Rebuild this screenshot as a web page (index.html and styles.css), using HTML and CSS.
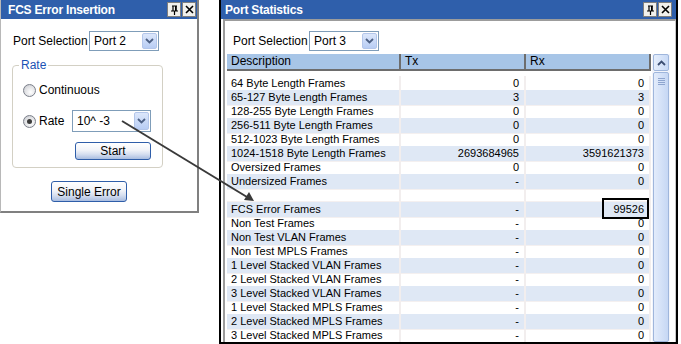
FILE: index.html
```html
<!DOCTYPE html>
<html>
<head>
<meta charset="utf-8">
<link rel="stylesheet" href="styles.css">
</head>
<body>
<div class="canvas">
  <section class="lp">
    <header class="tb">
      <span class="tb-title">FCS Error Insertion</span>
      <div class="tbtns">
        <span class="tbtn"><svg width="9" height="10" viewBox="0 0 9 10"><path d="M2 1h5M3 1v5M6 1v5M1 6h7M4.5 6v4" stroke="#000" stroke-width="1.2" fill="none"/><rect x="5" y="1" width="1.5" height="5" fill="#000"/></svg></span>
        <span class="tbtn"><svg width="9" height="9" viewBox="0 0 9 9"><path d="M1 1l7 7M8 1l-7 7" stroke="#000" stroke-width="1.6"/></svg></span>
      </div>
    </header>
    <div class="lp-body">
      <div class="psel">
        <span class="plabel">Port Selection</span>
        <div class="combo c-port"><span class="cval">Port 2</span><span class="dd"><svg width="9" height="6" viewBox="0 0 9 6"><path d="M1 1l3.5 3.5L8 1" stroke="#4d6185" stroke-width="1.8" fill="none"/></svg></span></div>
      </div>
      <fieldset class="grp">
        <legend>Rate</legend>
        <div class="radio r1"><span class="rb"></span><span>Continuous</span></div>
        <div class="radio r2"><span class="rb on"></span><span class="rlab">Rate</span>
          <div class="combo c-rate"><span class="cval">10^ -3</span><span class="dd"><svg width="9" height="6" viewBox="0 0 9 6"><path d="M1 1l3.5 3.5L8 1" stroke="#4d6185" stroke-width="1.8" fill="none"/></svg></span></div>
        </div>
        <button class="btn b-start">Start</button>
      </fieldset>
      <button class="btn b-single">Single Error</button>
    </div>
  </section>

  <section class="rp">
    <header class="tb">
      <span class="tb-title">Port Statistics</span>
      <div class="tbtns">
        <span class="tbtn"><svg width="9" height="10" viewBox="0 0 9 10"><path d="M2 1h5M3 1v5M6 1v5M1 6h7M4.5 6v4" stroke="#000" stroke-width="1.2" fill="none"/><rect x="5" y="1" width="1.5" height="5" fill="#000"/></svg></span>
        <span class="tbtn"><svg width="9" height="9" viewBox="0 0 9 9"><path d="M1 1l7 7M8 1l-7 7" stroke="#000" stroke-width="1.6"/></svg></span>
      </div>
    </header>
    <div class="rp-body">
      <div class="psel rsel">
        <span class="plabel">Port Selection</span>
        <div class="combo c-port2"><span class="cval">Port 3</span><span class="dd"><svg width="9" height="6" viewBox="0 0 9 6"><path d="M1 1l3.5 3.5L8 1" stroke="#4d6185" stroke-width="1.8" fill="none"/></svg></span></div>
      </div>
      <div class="tablewrap">
        <div class="grid">
          <div class="row head"><div class="c d">Description</div><div class="c t">Tx</div><div class="c r">Rx</div></div>
          <div class="rows">
            <div class="row"><div class="c d">64 Byte Length Frames</div><div class="c n">0</div><div class="c n">0</div></div>
            <div class="row alt"><div class="c d">65-127 Byte Length Frames</div><div class="c n">3</div><div class="c n">3</div></div>
            <div class="row"><div class="c d">128-255 Byte Length Frames</div><div class="c n">0</div><div class="c n">0</div></div>
            <div class="row alt"><div class="c d">256-511 Byte Length Frames</div><div class="c n">0</div><div class="c n">0</div></div>
            <div class="row"><div class="c d">512-1023 Byte Length Frames</div><div class="c n">0</div><div class="c n">0</div></div>
            <div class="row alt"><div class="c d">1024-1518 Byte Length Frames</div><div class="c n">2693684965</div><div class="c n">3591621373</div></div>
            <div class="row"><div class="c d">Oversized Frames</div><div class="c n">0</div><div class="c n">0</div></div>
            <div class="row alt"><div class="c d">Undersized Frames</div><div class="c n">-</div><div class="c n">0</div></div>
            <div class="row"><div class="c d"></div><div class="c n"></div><div class="c n"></div></div>
            <div class="row alt"><div class="c d">FCS Error Frames</div><div class="c n">-</div><div class="c n hl">99526<span class="hbox"></span></div></div>
            <div class="row"><div class="c d">Non Test Frames</div><div class="c n">-</div><div class="c n">0</div></div>
            <div class="row alt"><div class="c d">Non Test VLAN Frames</div><div class="c n">-</div><div class="c n">0</div></div>
            <div class="row"><div class="c d">Non Test MPLS Frames</div><div class="c n">-</div><div class="c n">0</div></div>
            <div class="row alt"><div class="c d">1 Level Stacked VLAN Frames</div><div class="c n">-</div><div class="c n">0</div></div>
            <div class="row"><div class="c d">2 Level Stacked VLAN Frames</div><div class="c n">-</div><div class="c n">0</div></div>
            <div class="row alt"><div class="c d">3 Level Stacked VLAN Frames</div><div class="c n">-</div><div class="c n">0</div></div>
            <div class="row"><div class="c d">1 Level Stacked MPLS Frames</div><div class="c n">-</div><div class="c n">0</div></div>
            <div class="row alt"><div class="c d">2 Level Stacked MPLS Frames</div><div class="c n">-</div><div class="c n">0</div></div>
            <div class="row"><div class="c d">3 Level Stacked MPLS Frames</div><div class="c n">-</div><div class="c n">0</div></div>
          </div>
        </div>
        <div class="sbar">
          <div class="sb-up"><svg width="9" height="6" viewBox="0 0 9 6"><path d="M1 5l3.5-3.5L8 5" stroke="#3b4e72" stroke-width="1.8" fill="none"/></svg></div>
          <div class="sb-thumb"><span class="grip"></span><span class="grip"></span><span class="grip"></span><span class="grip"></span></div>
        </div>
      </div>
    </div>
  </section>

  <svg class="arrow" width="681" height="344" viewBox="0 0 681 344">
    <line x1="122" y1="121" x2="247" y2="197" stroke="#3a3a3a" stroke-width="2"/>
    <polygon points="254,201 244,200 249,192" fill="#3a3a3a"/>
  </svg>
</div>
</body>
</html>
```

FILE: styles.css
```css
* { box-sizing: border-box; }
html, body { margin: 0; padding: 0; background: #fff; }
body {
  font-family: "Liberation Sans", Arial, sans-serif;
  font-size: 11px;
  color: #000;
  width: 681px;
  height: 344px;
  overflow: hidden;
}
.canvas {
  position: relative;
  display: flex;
  align-items: flex-start;
  width: 681px;
  height: 344px;
}

/* title bars */
.tb {
  height: 19px;
  background: #2f5fab;
  display: flex;
  align-items: center;
  justify-content: space-between;
  padding: 0 3px 0 7px;
}
.tb-title {
  color: #fff;
  font-weight: bold;
  font-size: 12px;
  letter-spacing: -0.2px;
}
.tbtns { display: flex; gap: 1px; }
.tbtn {
  width: 14px;
  height: 15px;
  background: #f1f0ec;
  border: 1px solid #7e7e7e;
  display: flex;
  align-items: center;
  justify-content: center;
}

/* left panel */
.lp {
  width: 199px;
  height: 213px;
  border-right: 2px solid #808080;
  border-bottom: 2px solid #808080;
  border-left: 1px solid #b8b8b8;
}
.lp .tb { padding-right: 1px; }
.lp-body { display: flex; flex-direction: column; }
.psel { display: flex; align-items: center; }
.lp .psel { padding: 12px 0 0 12px; }
.plabel { width: 76px; font-size: 12px; }
.combo {
  height: 20px;
  border: 1px solid #7f9db9;
  background: #fff;
  display: flex;
  align-items: center;
  justify-content: space-between;
  padding: 1px;
  font-size: 12px;
}
.cval { padding-left: 3px; }
.dd {
  width: 15px;
  height: 16px;
  border: 1px solid #b3c6ea;
  border-radius: 2px;
  background: linear-gradient(#dce7fb, #b8cdf4);
  display: flex;
  align-items: center;
  justify-content: center;
}
.c-port { width: 70px; }

.grp {
  margin: 7px 0 0 11px;
  width: 151px;
  height: 110px;
  border: 1px solid #d3d0c4;
  border-radius: 4px;
  padding: 0 6px 0 6px;
  display: flex;
  flex-direction: column;
}
.grp legend {
  color: #1a52b4;
  padding: 0 2px;
  font-size: 12px;
  line-height: 14px;
}
.radio { display: flex; align-items: center; font-size: 12px; }
.r1 { margin: 11px 0 0 4px; }
.r2 { margin: 13px 0 0 4px; }
.rb {
  width: 13px;
  height: 13px;
  border-radius: 50%;
  border: 1px solid #7b7f8a;
  background: radial-gradient(circle at 60% 65%, #fff 0, #dedfe2 60%, #b9bcc3 100%);
  margin-right: 3px;
  position: relative;
  display: flex;
  align-items: center;
  justify-content: center;
}
.rb.on::after {
  content: "";
  width: 5px;
  height: 5px;
  border-radius: 50%;
  background: #3b3b3b;
}
.rlab { width: 33px; }
.c-rate { width: 79px; height: 22px; }
.c-rate .dd { height: 18px; }

.btn {
  font-family: "Liberation Sans", Arial, sans-serif;
  font-size: 12px;
  color: #000;
  border: 1px solid #2f5ea9;
  border-radius: 3px;
  background: linear-gradient(#ffffff 0%, #f1f3f8 45%, #d6dff0 70%, #a9bde0 100%);
  padding: 0;
}
.b-start { width: 76px; height: 18px; margin: 10px 0 0 56px; }
.b-single { width: 76px; height: 21px; margin: 13px 0 0 50px; }

/* right panel */
.rp {
  margin-left: 20px;
  width: 459px;
  height: 344px;
  border-left: 2px solid #000;
  border-right: 2px solid #000;
  border-bottom: 2px solid #000;
  display: flex;
  flex-direction: column;
}
.rp .tb { padding-left: 4px; padding-right: 4px; }
.rp-body {
  flex: 1;
  margin-left: 2px;
  border-left: 2px solid #9c9c9c;
  border-top: 2px solid #9c9c9c;
  border-right: 1px solid #c8c8c8;
  display: flex;
  flex-direction: column;
  overflow: hidden;
}
.rsel { padding: 10px 0 3px 8px; }
.c-port2 { width: 70px; }

.tablewrap { display: flex; padding-left: 2px; }
.grid { width: 424px; }
.row {
  display: grid;
  grid-template-columns: 174px 125px 125px;
  height: 14px;
}
.row .c {
  border-right: 2px solid #f2eeee;
  border-bottom: 1px solid #f4f0f0;
  line-height: 15px;
  white-space: nowrap;
  overflow: visible;
}
.row .d { padding-left: 4px; }
.row .n { text-align: right; padding-right: 5px; }
.row.alt .c { background: #dfe8f5; }
.head { height: 16px; }
.head .c {
  background: #a7c5e7;
  border-right: 2px solid #6d6d6d;
  border-bottom: 2px solid #6d6d6d;
  line-height: 15px;
  font-size: 12px;
  padding-left: 4px;
}
.head .t { padding-left: 4px; }
.rows { margin-top: 6px; }
.hl { position: relative; }
.hbox {
  position: absolute;
  right: 0;
  top: -4px;
  width: 47px;
  height: 21px;
  border: 2px solid #000;
}

.sbar {
  width: 18px;
  margin-left: 1px;
  display: flex;
  flex-direction: column;
  background: #f3f5fb;
}
.sb-up {
  height: 17px;
  margin: 0 1px;
  border: 1px solid #9fb6dc;
  border-radius: 2px;
  background: linear-gradient(90deg, #e5eefc, #c9daf6);
  display: flex;
  align-items: center;
  justify-content: center;
}
.sb-thumb {
  flex: 1;
  height: 280px;
  margin: 1px 1px 0;
  border: 1px solid #9fb6dc;
  border-radius: 2px;
  background: linear-gradient(90deg, #e3ecfb, #c6d7f4);
  display: flex;
  flex-direction: column;
  align-items: center;
  padding-top: 5px;
  gap: 1px;
}
.grip { width: 7px; height: 1px; background: #8ea5cf; }

.arrow {
  position: absolute;
  left: 0;
  top: 0;
  pointer-events: none;
}
```
